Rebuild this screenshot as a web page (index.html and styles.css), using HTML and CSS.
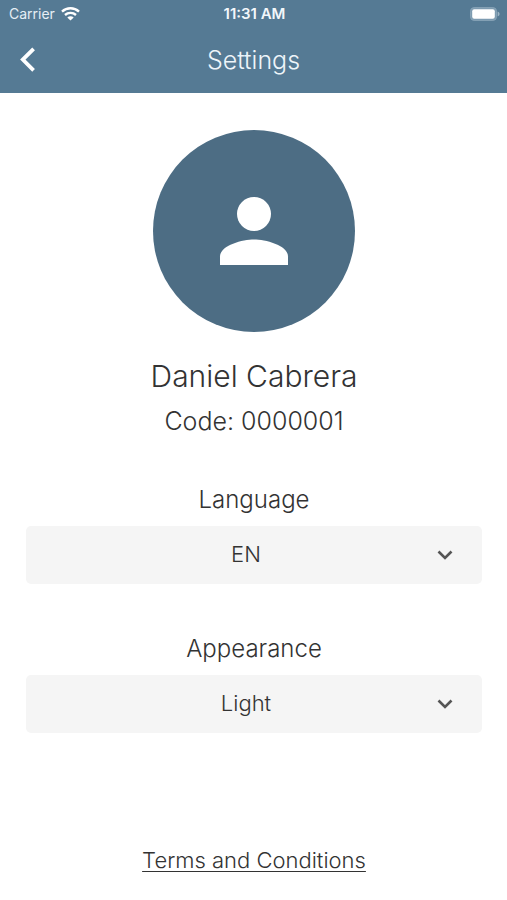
FILE: index.html
```html
<!DOCTYPE html>
<html lang="en">
<head>
<meta charset="utf-8">
<meta name="viewport" content="width=device-width, initial-scale=1">
<title>Settings</title>
<link rel="stylesheet" href="styles.css">
</head>
<body>
<header class="header">
  <div class="status">
    <div class="carrier">
      <span>Carrier</span>
      <svg width="19" height="14" viewBox="0 0 19 14" fill="none" stroke="#fff" stroke-width="2.4" aria-hidden="true">
        <path d="M1 4.600C5.800 .2 13.200 .2 18 4.600M4 8c3.100-2.800 7.900-2.800 11 0"/>
        <path d="M9.500 13.600 6.300 10.500c1.800-1.600 4.600-1.600 6.400 0z" fill="#fff" stroke="none"/>
      </svg>
    </div>
    <time class="time">11:31 AM</time>
    <svg class="battery" width="31" height="14" viewBox="0 0 31 14" aria-hidden="true">
      <rect x="1.500" y=".6" width="26" height="12.800" rx="3.600" fill="#7d9bb0" stroke="#87a3b7"/>
      <rect x="3.200" y="2.300" width="22.600" height="9.400" rx="2" fill="#fff"/>
      <path d="M28.600 4.600c2.600.8 2.600 4 0 4.800z" fill="#9db4c4"/>
    </svg>
  </div>
  <nav class="nav">
    <button class="back" type="button" aria-label="Back">
      <svg width="16" height="26" viewBox="0 0 16 26" fill="none" stroke="#fff" stroke-width="3.800" aria-hidden="true"><path d="M13.600 1.800 2.800 12.600l10.800 10.800"/></svg>
    </button>
    <h1 class="title">Settings</h1>
  </nav>
</header>
<main class="content">
  <div class="avatar">
    <svg width="102" height="102" viewBox="0 0 24 24" fill="#fff" aria-hidden="true"><circle cx="12" cy="8" r="4"/><path d="M12 14c-2.670 0-8 1.340-8 4v2h16v-2c0-2.660-5.330-4-8-4z"/></svg>
  </div>
  <h2 class="name">Daniel Cabrera</h2>
  <p class="code">Code: 0000001</p>
  <div class="field">
    <label class="label" for="language">Language</label>
    <div class="picker">
      <select class="select" id="language"><option>EN</option></select>
      <svg class="chevron" width="16" height="10" viewBox="0 0 16 10" fill="none" stroke="#555" stroke-width="2.600" aria-hidden="true"><path d="m1.500 1.500 6.500 6.500 6.500-6.500"/></svg>
    </div>
  </div>
  <div class="field">
    <label class="label" for="appearance">Appearance</label>
    <div class="picker">
      <select class="select" id="appearance"><option>Light</option></select>
      <svg class="chevron" width="16" height="10" viewBox="0 0 16 10" fill="none" stroke="#555" stroke-width="2.600" aria-hidden="true"><path d="m1.500 1.500 6.500 6.500 6.500-6.500"/></svg>
    </div>
  </div>
  <a class="terms" href="#terms">Terms and Conditions</a>
</main>
</body>
</html>
```
FILE: styles.css
```css
* { box-sizing: border-box; }
body {
  margin: 0;
  min-height: 100vh;
  display: flex;
  flex-direction: column;
  background: #fff;
  color: #333;
  font-family: Inter, "Liberation Sans", sans-serif;
  font-weight: 300;
}
h1, h2, p { margin: 0; font-weight: 300; }
svg { display: block; }
.header { background: #557a94; color: #fff; }
.status {
  display: grid;
  grid-template-columns: 1fr auto 1fr;
  align-items: center;
  height: 27px;
  padding: 0 7px 0 9px;
}
.carrier {
  display: flex;
  align-items: center;
  gap: 6px;
  font-size: 14px;
  font-weight: 400;
  color: #e6eef5;
}
.time { font-size: 15px; font-weight: 600; color: #f2f7fb; }
.battery { justify-self: end; }
.nav {
  display: grid;
  grid-template-columns: 48px 1fr 48px;
  align-items: center;
  height: 66px;
}
.back {
  display: flex;
  align-items: center;
  height: 48px;
  padding: 0 0 0 20px;
  border: 0;
  background: none;
}
.title { font-size: 25px; text-align: center; color: #eef5fa; }
.content {
  flex: 1;
  display: flex;
  flex-direction: column;
  align-items: center;
  padding: 37px 25px 25px 26px;
}
.avatar {
  display: flex;
  align-items: center;
  justify-content: center;
  width: 202px;
  height: 202px;
  border-radius: 50%;
  background: #4d6d84;
}
.name { margin-top: 24px; font-size: 30px; line-height: 40px; }
.code { margin-top: 9px; font-size: 25px; line-height: 32px; }
.field {
  width: 100%;
  margin-top: 47px;
  display: flex;
  flex-direction: column;
  gap: 10px;
}
.label { font-size: 24px; line-height: 32px; text-align: center; }
.field + .field { margin-top: 49px; }
.picker { display: grid; align-items: center; }
.picker > * { grid-area: 1 / 1; }
.select {
  width: 100%;
  height: 58px;
  padding: 0 16px 2px 0;
  border: 0;
  border-radius: 5px;
  background: #f5f5f5;
  color: #333;
  font: inherit;
  font-size: 22px;
  text-align: center;
  text-align-last: center;
  appearance: none;
}
.chevron { justify-self: end; margin-right: 29px; pointer-events: none; }
.terms {
  margin-top: auto;
  color: #333;
  font-size: 22px;
  line-height: 30px;
  text-decoration-thickness: 1px;
  text-underline-offset: 3px;
}
```
